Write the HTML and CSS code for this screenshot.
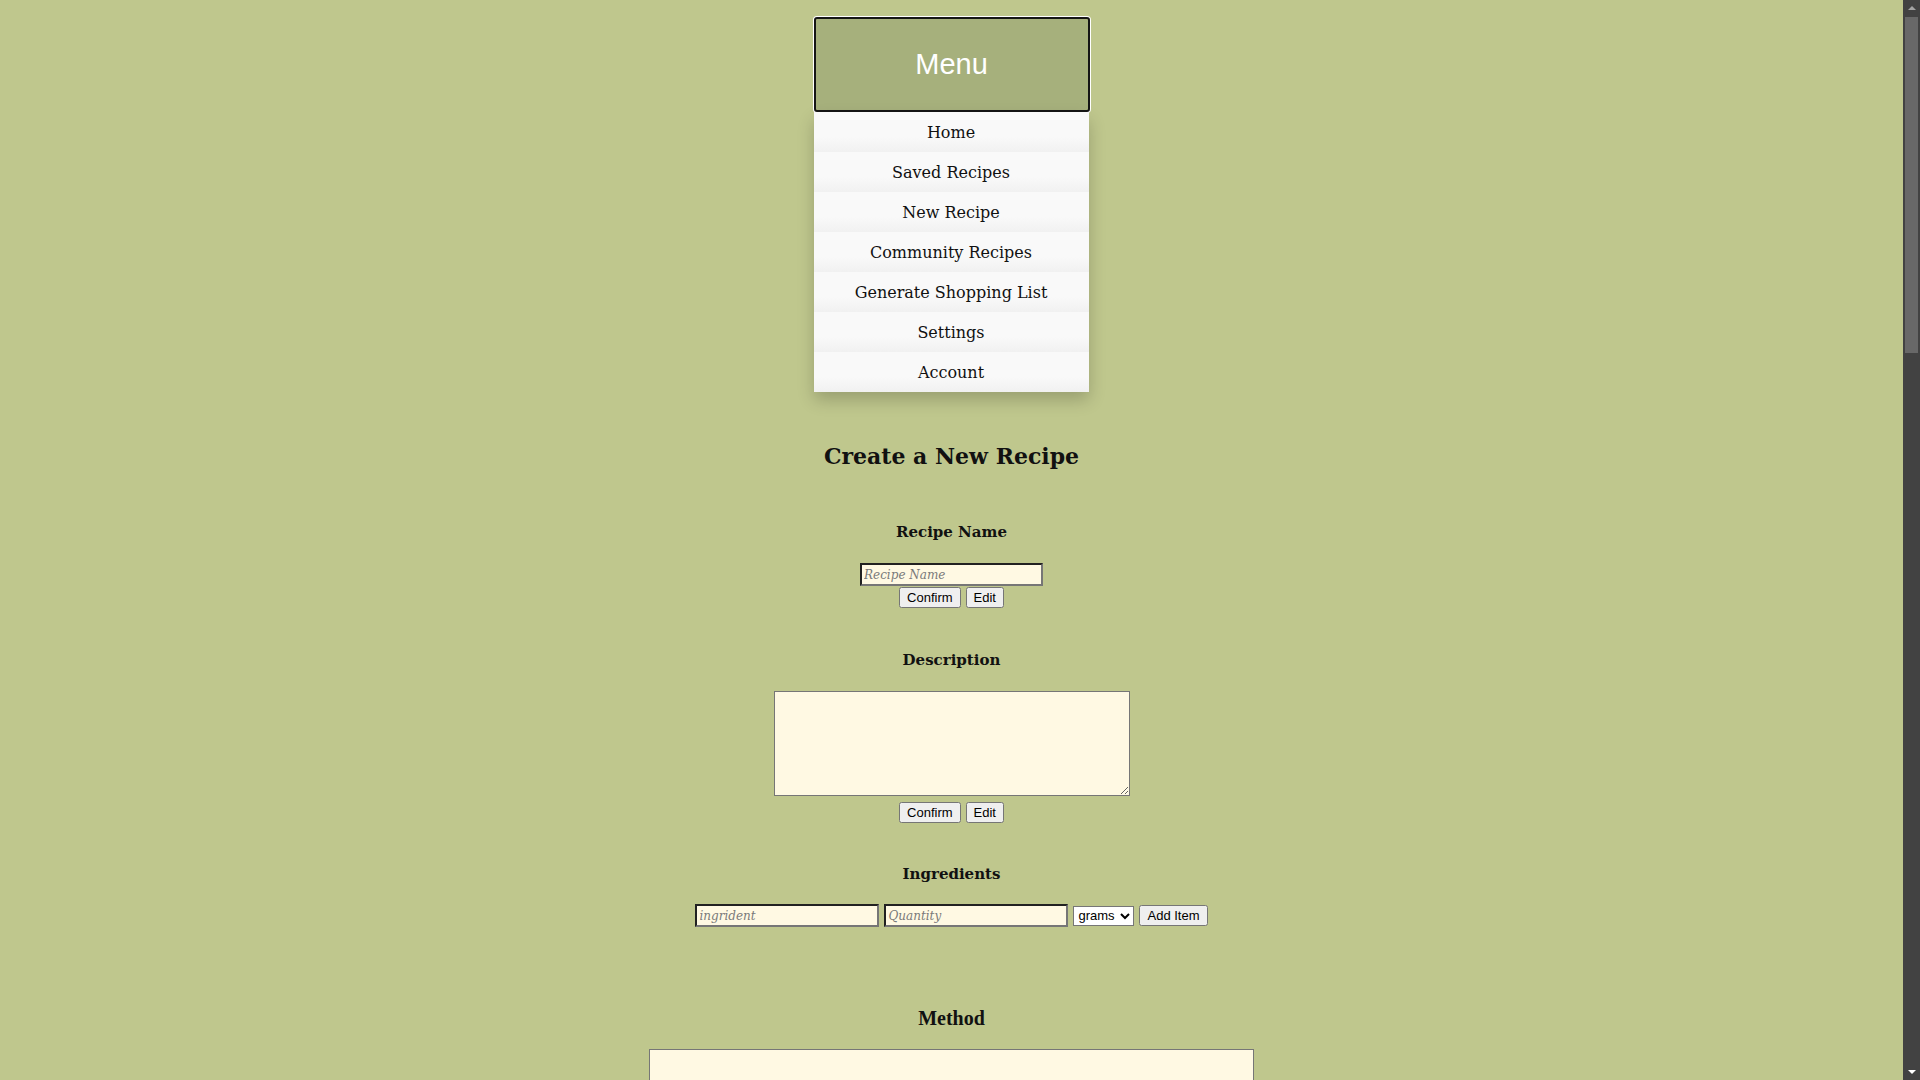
FILE: index.html
```html
<!DOCTYPE html>
<html lang="en">
<head>
<meta charset="utf-8">
<title>New Recipe</title>
<link rel="stylesheet" href="styles.css">
</head>
<body class="app">
<div class="viewport">
  <nav class="menu">
    <button class="menu-btn">Menu</button>
    <div class="menu-list">
      <a class="menu-item" href="#">Home</a>
      <a class="menu-item" href="#">Saved Recipes</a>
      <a class="menu-item" href="#">New Recipe</a>
      <a class="menu-item" href="#">Community Recipes</a>
      <a class="menu-item" href="#">Generate Shopping List</a>
      <a class="menu-item" href="#">Settings</a>
      <a class="menu-item" href="#">Account</a>
    </div>
  </nav>
  <main class="page">
    <h2 class="page-title">Create a New Recipe</h2>

    <section class="block block-name">
      <h3 class="block-title">Recipe Name</h3>
      <input class="text-input" type="text" placeholder="Recipe Name">
      <div class="btn-row btn-row-tight">
        <button class="btn">Confirm</button>
        <button class="btn">Edit</button>
      </div>
    </section>

    <section class="block block-desc">
      <h3 class="block-title">Description</h3>
      <textarea class="desc-area"></textarea>
      <div class="btn-row btn-row-desc">
        <button class="btn">Confirm</button>
        <button class="btn">Edit</button>
      </div>
    </section>

    <section class="block block-ingr">
      <h3 class="block-title">Ingredients</h3>
      <div class="ingr-row">
        <input class="text-input" type="text" placeholder="ingrident">
        <input class="text-input" type="text" placeholder="Quantity">
        <select class="unit-select">
          <option>grams</option>
          <option>ml</option>
          <option>items</option>
        </select>
        <button class="btn">Add Item</button>
      </div>
    </section>

    <section class="block block-method">
      <h3 class="method-title">Method</h3>
      <textarea class="method-area"></textarea>
    </section>
  </main>
</div>
<div class="scrollbar" aria-hidden="true">
  <div class="sb-btn"><span class="arrow-up"></span></div>
  <div class="sb-track"><div class="sb-thumb"></div></div>
  <div class="sb-btn"><span class="arrow-down"></span></div>
</div>
</body>
</html>
```
FILE: styles.css
```css
html {
  background: #bfc78d;
}
body.app {
  margin: 0;
  height: 100vh;
  overflow: hidden;
  display: flex;
  background: #bfc78d;
  font-family: "DejaVu Serif", "Liberation Serif", serif;
  color: #111;
}
.viewport {
  flex: 1;
  min-width: 0;
  overflow: hidden;
}

/* fake classic scrollbar */
.scrollbar {
  width: 17px;
  flex: 0 0 17px;
  display: flex;
  flex-direction: column;
  background: #424242;
}
.sb-btn {
  height: 17px;
  flex: 0 0 17px;
  display: flex;
  align-items: center;
  justify-content: center;
}
.arrow-up {
  width: 0;
  height: 0;
  border-left: 4px solid transparent;
  border-right: 4px solid transparent;
  border-bottom: 4px solid #a3a3a3;
  margin-left: 1px;
  margin-top: -1px;
}
.arrow-down {
  width: 0;
  height: 0;
  border-left: 4px solid transparent;
  border-right: 4px solid transparent;
  border-top: 4px solid #ffffff;
  margin-left: 1px;
  margin-top: 1px;
}
.sb-track {
  flex: 1;
  padding: 0 2px;
}
.sb-thumb {
  height: 336px;
  background: #686868;
}

.menu {
  width: 276px;
  margin: 17px auto 0;
  display: flex;
  flex-direction: column;
}
.menu-btn {
  box-sizing: border-box;
  height: 95px;
  width: 100%;
  margin: 0;
  background: #a6b07c;
  color: #fff;
  font-family: "Liberation Sans", Arial, sans-serif;
  font-size: 29px;
  border: 2px solid #151515;
  border-radius: 3px;
  box-shadow: 0 0 0 1px #ffffff;
  cursor: pointer;
}
.menu-list {
  display: flex;
  flex-direction: column;
  background: #f9f9f9;
  box-shadow: 0 8px 16px 0 rgba(0, 0, 0, 0.2);
  margin-right: 1px;
}
.menu-item {
  height: 40px;
  display: flex;
  align-items: center;
  justify-content: center;
  font-size: 16px;
  color: #111;
  text-decoration: none;
  background: linear-gradient(to bottom, #f9f9f9 0%, #f9f9f9 62%, #f1f1f1 100%);
}

.page {
  display: flex;
  flex-direction: column;
  align-items: center;
}
.page-title {
  margin: 50px 0 0;
  font-size: 22px;
  line-height: 28px;
  font-weight: bold;
}
.block {
  display: flex;
  flex-direction: column;
  align-items: center;
}
.block-title {
  margin: 0;
  font-size: 15px;
  line-height: 20px;
  font-weight: bold;
}
.block-name { margin-top: 52px; }
.block-desc { margin-top: 42px; }
.block-ingr { margin-top: 41px; }
.block-method { margin-top: 79px; }

.text-input {
  box-sizing: border-box;
  width: 183px;
  height: 23px;
  margin: 21px 0 0;
  padding: 1px 2px;
  background: #fff9e3;
  font-family: "DejaVu Serif", serif;
  font-size: 12px;
}
.text-input::placeholder {
  color: #7a7a7a;
  font-style: italic;
}
.btn-row {
  display: flex;
  gap: 5px;
}
.btn-row-tight { margin-top: 1px; }
.btn-row-desc { margin-top: 6px; }
.btn {
  font-family: "Liberation Sans", Arial, sans-serif;
  font-size: 13px;
  height: 21px;
  padding: 1px 6px;
  margin: 0;
}
.desc-area {
  box-sizing: border-box;
  width: 356px;
  height: 105px;
  margin-top: 21px;
  background: #fff9e3;
  display: block;
}

.ingr-row {
  display: flex;
  align-items: center;
  gap: 5px;
  margin-top: 20px;
}
.ingr-row .text-input {
  margin: 0;
  width: 184px;
  height: 23px;
}
.unit-select {
  font-family: "Liberation Sans", Arial, sans-serif;
  font-size: 13px;
  width: 61px;
  height: 20px;
  background: #fff;
}

.method-title {
  margin: 0;
  font-family: "Liberation Serif", "Times New Roman", serif;
  font-size: 20px;
  line-height: 24px;
  font-weight: bold;
}
.method-area {
  box-sizing: border-box;
  width: 605px;
  height: 200px;
  margin-top: 19px;
  background: #fff9e3;
  display: block;
}
```
